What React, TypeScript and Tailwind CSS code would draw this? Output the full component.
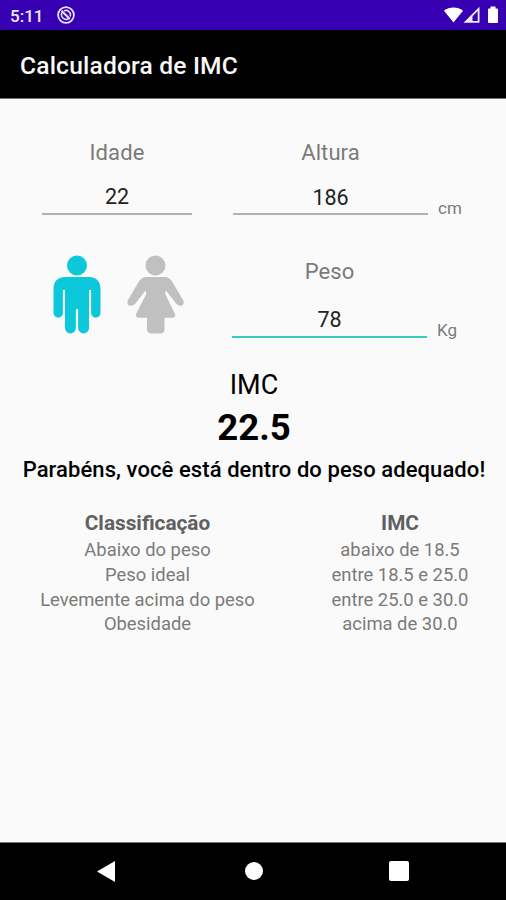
const rows = [
  ["Abaixo do peso", "abaixo de 18.5"],
  ["Peso ideal", "entre 18.5 e 25.0"],
  ["Levemente acima do peso", "entre 25.0 e 30.0"],
  ["Obesidade", "acima de 30.0"],
];

function StatusBar() {
  return (
    <div className="flex h-[30px] items-center bg-[#3700b3] pl-[10px] pr-[7px] text-white">
      <span className="pt-px text-[17px] leading-[30px] text-[#f0ebfc] font-medium">5:11</span>
      <svg className="ml-[14px]" width="18" height="18" viewBox="0 0 18 18" fill="none" stroke="#e8e0fa">
        <circle cx="9" cy="9" r="7.900" strokeWidth="1.8" />
        <path d="M5.200 6.500A4.500 4.500 0 0 0 11.500 12.600M7 4.900A4.500 4.500 0 0 1 13.200 10.500" strokeWidth="1.5" />
        <path d="M4.500 4.800 12.800 13" strokeWidth="2" />
      </svg>
      <svg className="ml-auto" width="55" height="18" viewBox="0 0 55 18" fill="#fff">
        <path d="M0 4.8C5.5.4 13.500.4 19 4.800L9.500 16.500Z" />
        <path d="M35.500.8V16.800H19.500ZM33.700 5V15H28.500V10.200Z" fillRule="evenodd" opacity=".92" />
        <path d="M46.500.5h5v2H53q1 0 1 1V16q0 1-1 1h-8q-1 0-1-1V3.500q0-1 1-1h1.500Z" />
      </svg>
    </div>
  );
}

function Man() {
  return (
    <svg width="48" height="80" viewBox="0 0 48 80" fill="#0bc8da">
      <circle cx="24" cy="10.500" r="10" />
      <path d="M12 22H36Q47.500 22.500 47.500 34V58a4.700 4.700 0 0 1-9.400 0V35H36V73a5.400 5.400 0 0 1-10.900 0V54H22.900V73a5.400 5.400 0 0 1-10.900 0V35H9.900V58a4.700 4.700 0 0 1-9.400 0V34Q.5 22.500 12 22Z" />
    </svg>
  );
}

function Woman() {
  return (
    <svg width="58" height="80" viewBox="0 0 58 80" fill="#c0c0c0">
      <circle cx="28.500" cy="10.500" r="10" />
      <path d="M18.500 22H38.500Q42 22.300 44.500 25.500L56 45Q58 48.500 55 50.500Q52 51.500 49.500 49L39 35.500L38 38.500L48 59Q49 62.500 45.500 62.800H37.500V75Q37 78.500 33 78.500H25Q21 78.500 20 75V62.800H12Q8 62.500 9 59L19.500 38.500L18.500 35.500L8 49Q5 51.500 2 50.500Q-.5 48.500 1 45L12.500 25.500Q15 22.300 18.500 22Z" />
    </svg>
  );
}

export default function App() {
  return (
    <div className="flex h-[900px] w-[506px] flex-col overflow-hidden bg-[#fafafa] font-[Roboto,sans-serif] text-[#7a7a7a]">
      <StatusBar />
      <header className="flex h-[69px] items-center border-b border-[#777] bg-black pl-[20px] pt-[3px]">
        <h1 className="text-[24.6px] leading-[30px] font-medium tracking-[0.18px] whitespace-nowrap text-[#f8f8f8]">Calculadora de IMC</h1>
      </header>

      <main className="flex flex-1 flex-col">
        <section className="flex h-[118px] pt-[41px] text-center text-[22px] leading-[26px]">
          <div className="ml-[42px] w-[150px]">
            <div className="tracking-[0.15px]">Idade</div>
            <div className="mt-[18px] h-[31px] border-b-2 border-[#b2b2b2] text-[21.5px] text-[#222]">22</div>
          </div>
          <div className="ml-[41px] w-[195px]">
            <div className="tracking-[0.1px]">Altura</div>
            <div className="mt-[19px] h-[30px] border-b-2 border-[#b2b2b2] text-[21.5px] text-[#222]">186</div>
          </div>
          <span className="ml-[10px] pt-[55px] text-[17px]">cm</span>
        </section>

        <section className="flex h-[150px] text-center text-[22px] leading-[26px]">
          <div className="flex pt-[38px] pl-[53px]">
            <Man />
            <div className="ml-[26px]"><Woman /></div>
          </div>
          <div className="ml-[47px] w-[195px] pt-[42px]">
            <div className="tracking-[0.1px]">Peso</div>
            <div className="mt-[22px] h-[31px] border-b-2 border-[#37cfbc] text-[21.5px] text-[#222]">78</div>
          </div>
          <span className="ml-[10px] pt-[100px] text-[17px]">Kg</span>
        </section>

        <section className="flex flex-col items-center pt-[2px] text-black">
          <div className="pl-[2px] text-[27px] leading-[32px]">IMC</div>
          <div className="mt-[6px] pl-[2px] text-[36.500px] leading-[42px] font-bold">22.5</div>
          <div className="mt-[8px] pl-[2px] text-[22px] leading-[26px] font-medium tracking-[0.08px] whitespace-nowrap">Parabéns, você está dentro do peso adequado!</div>
        </section>

        <section className="mt-[28px] flex text-center text-[18.400px] leading-[25px] whitespace-nowrap">
          <div className="w-[295px]">
            <div className="mb-px text-[20.800px] font-bold text-[#606060]">Classificação</div>
            {rows.map((r) => <div key={r[0]} className="h-[24.8px]">{r[0]}</div>)}
          </div>
          <div className="w-[210px]">
            <div className="mb-px text-[20.800px] font-bold text-[#606060]">IMC</div>
            {rows.map((r) => <div key={r[1]} className="h-[24.8px]">{r[1]}</div>)}
          </div>
        </section>
      </main>

      <nav className="flex h-[58px] items-center border-t border-[#777] bg-black pb-px pl-[97px]">
        <svg width="18" height="21" viewBox="0 0 18 21" fill="#fff"><path d="M0 10.500 18 0V21Z" /></svg>
        <div className="ml-[130px] size-[18px] rounded-full bg-white" />
        <div className="ml-[126px] size-[20px] rounded-[2px] bg-white" />
      </nav>
    </div>
  );
}
